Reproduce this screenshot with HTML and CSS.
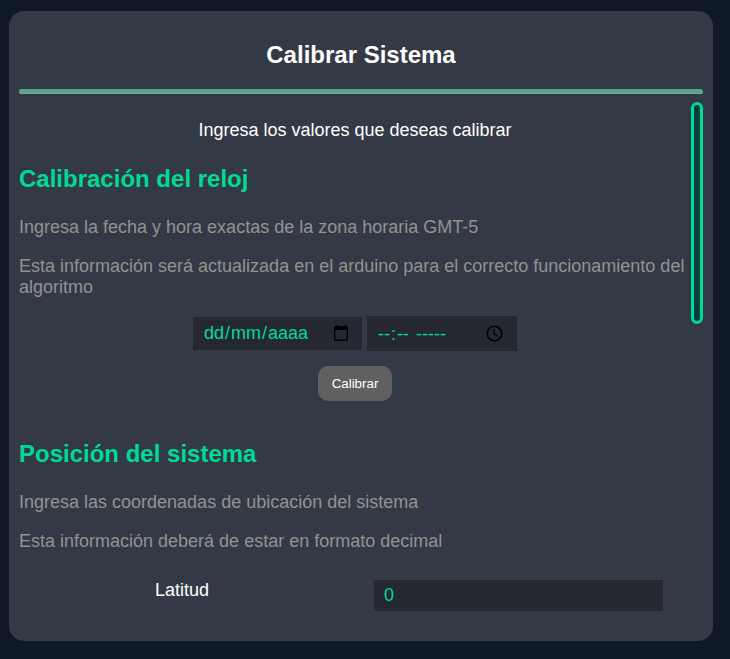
FILE: index.html
```html
<!DOCTYPE html>
<html lang="es">
<head>
<meta charset="utf-8">
<title>Calibrar Sistema</title>
<link rel="stylesheet" href="styles.css">
</head>
<body>
<main class="card">
  <h2 class="title">Calibrar Sistema</h2>
  <hr class="rule">
  <div class="viewport">
    <div class="content">
      <p class="intro">Ingresa los valores que deseas calibrar</p>
      <h2 class="section">Calibración del reloj</h2>
      <p class="help">Ingresa la fecha y hora exactas de la zona horaria GMT-5</p>
      <p class="help">Esta información será actualizada en el arduino para el correcto funcionamiento del algoritmo</p>
      <div class="clock-fields">
        <div class="field date"><span><span class="part">dd</span>/<span class="part">mm</span>/<span class="part">aaaa</span></span>
          <svg class="calendar-icon" width="14" height="16" viewBox="0 0 14 16"><path fill-rule="evenodd" d="M2 0h1.5v1h7V0H12v1h1l1 1v13l-1 1H1l-1-1V2l1-1h1zM1.3 5v9.5h11.4V5z"/></svg>
        </div>
        <div class="field time"><span class="time-text"><span class="part">--</span>:<span class="part">--</span> <span class="part">-----</span></span>
          <svg class="clock-icon" width="17" height="17" viewBox="0 0 17 17" fill="none" stroke="#000" stroke-width="1.6"><circle cx="8.5" cy="8.5" r="7.3"/><path d="M8.3 4v5l3.6 2.3" stroke-width="1.2"/></svg>
        </div>
      </div>
      <button class="button">Calibrar</button>
      <h2 class="section position">Posición del sistema</h2>
      <p class="help">Ingresa las coordenadas de ubicación del sistema</p>
      <p class="help">Esta información deberá de estar en formato decimal</p>
      <div class="coordinate">
        <label for="lat">Latitud</label>
        <input class="lat" id="lat" type="text" value="0">
      </div>
    </div>
    <div class="thumb"></div>
  </div>
</main>
</body>
</html>
```
FILE: styles.css
```css
* { box-sizing: border-box; }
body {
  margin: 0;
  padding: 11px 17px 18px 9px;
  height: 659px;
  overflow: hidden;
  background: #0f1826;
  color: #fff;
  font: 18px/21px "Liberation Sans", Arial, sans-serif;
}
.card {
  height: 630px;
  padding: 30px 10px 10px;
  border-radius: 15px;
  background: #343a45;
}
h2 { font-size: 24px; line-height: 27px; }
.title { margin: 0 0 21px; text-align: center; }
.rule {
  height: 5px;
  margin: 0 0 8px;
  border: 0;
  border-bottom: 1px solid #929a98;
  border-radius: 2px;
  background: #50a78b;
}
.viewport { display: flex; height: 529px; overflow: hidden; }
.content { width: 672px; padding-top: 18px; }
.thumb {
  width: 12px;
  height: 222px;
  border: 3px solid #00db94;
  border-radius: 6px;
  background: #003c3c;
}
.intro { margin: 0; text-align: center; }
.section { margin: 24px 0 25px; color: #00db94; }
.help { margin: 0 0 18px; color: #929292; }
.clock-fields { display: flex; justify-content: center; align-items: center; gap: 5px; }
.field {
  display: flex;
  align-items: center;
  justify-content: space-between;
  background: #252830;
  color: #00db94;
}
.date { width: 169px; height: 33px; padding: 0 14px 0 10px; }
.time { width: 150px; height: 35px; padding: 0 14px 0 10px; }
.part { padding: 0 1px; }
.time-text { padding-top: 2px; white-space: pre; }
.calendar-icon { margin-bottom: 2px; }
.button {
  display: block;
  width: 74px;
  height: 35px;
  margin: 15px auto 0;
  padding: 0;
  border: 0;
  border-radius: 10px;
  background: #606060;
  color: #fff;
  font: 13.333px "Liberation Sans", Arial, sans-serif;
}
.position { margin-top: 39px; }
.coordinate {
  display: grid;
  grid-template-columns: 326px 289px;
  column-gap: 29px;
  margin-top: 28px;
  text-align: center;
}
.lat {
  height: 31px;
  padding: 0 10px;
  border: 0;
  background: #252830;
  color: #00db94;
  font: inherit;
}
```
